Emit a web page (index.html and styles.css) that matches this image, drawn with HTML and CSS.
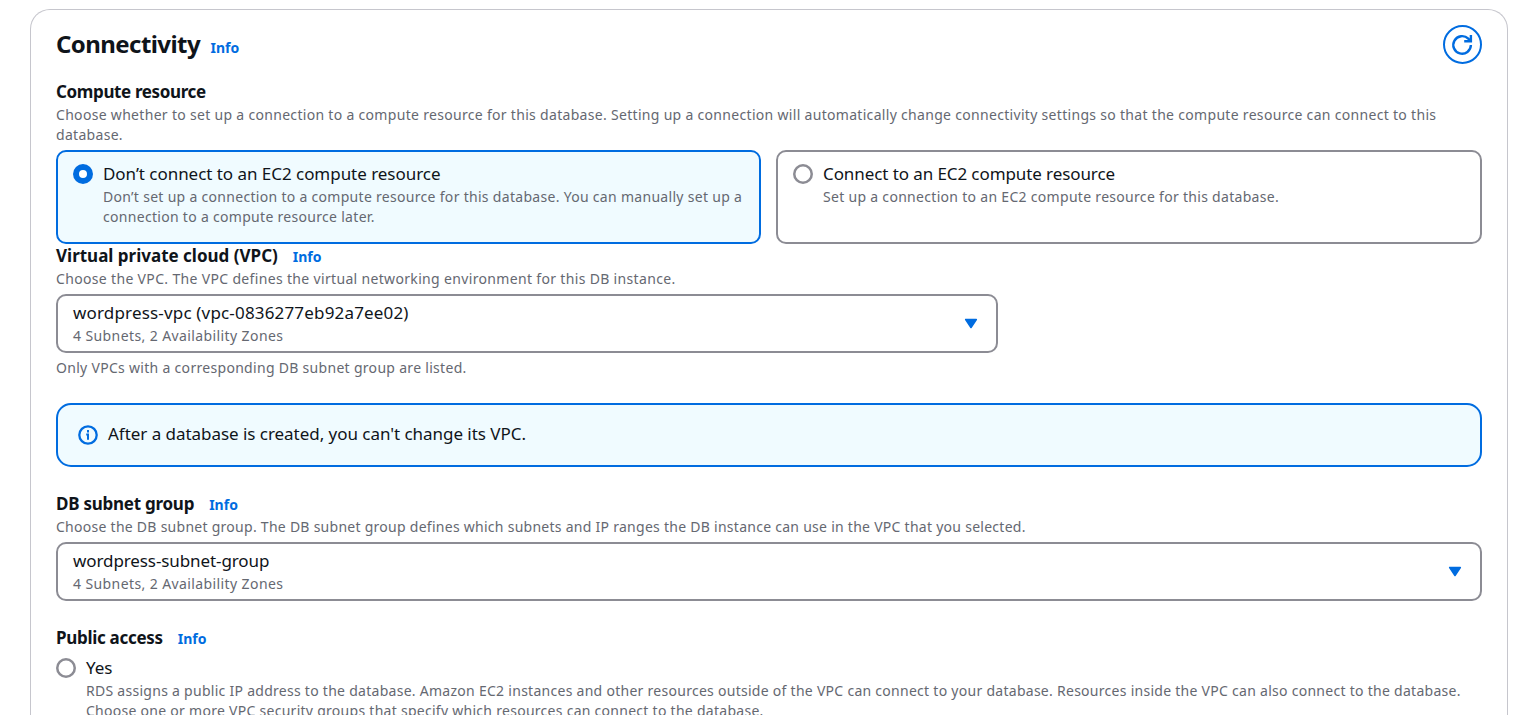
FILE: index.html
```html
<!DOCTYPE html>
<html lang="en">
<head>
<meta charset="utf-8">
<title>Connectivity</title>
<link rel="stylesheet" href="styles.css">
</head>
<body>
<main class="card">
  <header class="card-header">
    <h2 class="title"><span class="title-text">Connectivity</span><a class="info">Info</a></h2>
    <button class="refresh" aria-label="Refresh">
      <svg width="25" height="25" viewBox="0 0 25 25" fill="none" stroke="currentColor" stroke-width="2.4"><path d="M20.9 13a8.8 8.8 0 1 1-2.6-6.3L20.6 9"/><path d="M20.9 3v6.2h-6.7"/></svg>
    </button>
  </header>

  <section class="field">
    <h3 class="label"><span class="l-compute">Compute resource</span></h3>
    <p class="desc"><span class="d-compute">Choose whether to set up a connection to a compute resource for this database. Setting up a connection will automatically change connectivity settings so that the compute resource can connect to this</span><br>database.</p>
    <div class="tiles">
      <div class="tile selected">
        <span class="radio checked"></span>
        <div class="option">
          <div class="text"><span class="t-dont">Don’t connect to an EC2 compute resource</span></div>
          <p class="desc">Don’t set up a connection to a compute resource for this database. You can manually set up a<br>connection to a compute resource later.</p>
        </div>
      </div>
      <div class="tile">
        <span class="radio"></span>
        <div class="option">
          <div class="text"><span class="t-connect">Connect to an EC2 compute resource</span></div>
          <p class="desc">Set up a connection to an EC2 compute resource for this database.</p>
        </div>
      </div>
    </div>
  </section>

  <section class="field">
    <h3 class="label"><span class="l-vpc">Virtual private cloud (VPC)</span><a class="info">Info</a></h3>
    <p class="desc"><span class="d-vpc">Choose the VPC. The VPC defines the virtual networking environment for this DB instance.</span></p>
    <div class="select narrow">
      <div>
        <div class="text"><span class="t-vpc">wordpress-vpc (vpc-0836277eb92a7ee02)</span></div>
        <p class="desc"><span class="d-zones">4 Subnets, 2 Availability Zones</span></p>
      </div>
      <svg class="caret" width="14" height="12" viewBox="0 0 14 12"><path d="M1.7 1.5h10.6L7 9.5z" fill="currentColor" stroke="currentColor" stroke-width="1.6" stroke-linejoin="round"/></svg>
    </div>
    <p class="desc constraint">Only VPCs with a corresponding DB subnet group are listed.</p>
  </section>

  <div class="alert">
    <svg width="20" height="20" viewBox="0 0 20 20" fill="none" stroke="currentColor" stroke-width="2.3"><circle cx="10" cy="10" r="8.7"/><path d="M10 5v2.4M8.2 9.4H10v5.4" stroke-width="2"/></svg>
    <div class="text"><span class="t-alert">After a database is created, you can't change its VPC.</span></div>
  </div>

  <section class="field">
    <h3 class="label"><span class="l-subnet">DB subnet group</span><a class="info">Info</a></h3>
    <p class="desc"><span class="d-subnet">Choose the DB subnet group. The DB subnet group defines which subnets and IP ranges the DB instance can use in the VPC that you selected.</span></p>
    <div class="select">
      <div>
        <div class="text"><span class="t-subnet">wordpress-subnet-group</span></div>
        <p class="desc"><span class="d-zones">4 Subnets, 2 Availability Zones</span></p>
      </div>
      <svg class="caret" width="14" height="12" viewBox="0 0 14 12"><path d="M1.7 1.5h10.6L7 9.5z" fill="currentColor" stroke="currentColor" stroke-width="1.6" stroke-linejoin="round"/></svg>
    </div>
  </section>

  <section class="field public">
    <h3 class="label"><span class="l-public">Public access</span><a class="info">Info</a></h3>
    <div class="choice">
      <span class="radio"></span>
      <div class="option">
        <div class="text">Yes</div>
        <p class="desc"><span class="d-rds">RDS assigns a public IP address to the database. Amazon EC2 instances and other resources outside of the VPC can connect to your database. Resources inside the VPC can also connect to the database.</span><br><span class="d-rds">Choose one or more VPC security groups that specify which resources can connect to the database.</span></p>
      </div>
    </div>
  </section>
</main>
</body>
</html>
```
FILE: styles.css
```css
* { box-sizing: border-box; }
html, body { height: 100%; }
body {
  margin: 0;
  padding: 9px 22px 0 30px;
  overflow: hidden;
  background: #fff;
  color: #0f141a;
  font-family: "Noto Sans", "Open Sans", sans-serif;
}
h2, h3, p { margin: 0; }
.card {
  height: 706px;
  padding: 15px 25px 0;
  border: 1px solid #c6c6cd;
  border-bottom: 0;
  border-radius: 20px 20px 0 0;
  overflow: hidden;
}
.card-header {
  display: flex;
  justify-content: space-between;
  align-items: center;
  height: 39px;
  margin-bottom: 16px;
}
.title {
  display: flex;
  align-items: baseline;
  gap: 10.5px;
  padding-bottom: 2px;
  font-size: 24px;
  line-height: 30px;
  font-weight: 700;
}
.title-text { letter-spacing: -0.57px; }
.info {
  color: #006ce0;
  font-size: 14px;
  font-weight: 700;
  line-height: 20px;
  letter-spacing: 0;
}
.refresh {
  display: flex;
  align-items: center;
  justify-content: center;
  width: 39px;
  height: 39px;
  padding: 0;
  border: 2px solid #006ce0;
  border-radius: 50%;
  background: #fff;
  color: #006ce0;
}
.label {
  display: flex;
  align-items: baseline;
  gap: 15px;
  height: 25px;
  font-size: 17px;
  line-height: 23px;
  font-weight: 700;
}
.text {
  height: 25px;
  font-size: 17px;
  line-height: 23px;
  white-space: nowrap;
}
.desc {
  color: #656871;
  font-size: 14px;
  line-height: 20px;
  letter-spacing: 0.3px;
  white-space: nowrap;
}
.l-compute { letter-spacing: -0.37px; }
.l-subnet { letter-spacing: -0.25px; }
.l-public { letter-spacing: -0.3px; }
.t-dont { letter-spacing: -0.04px; }
.t-connect { letter-spacing: -0.09px; }
.t-vpc { letter-spacing: 0.17px; }
.t-alert { letter-spacing: -0.04px; }
.t-subnet { letter-spacing: -0.1px; }
.d-compute { letter-spacing: 0.308px; }
.d-vpc { letter-spacing: 0.335px; }
.d-zones { letter-spacing: 0.4px; }
.d-subnet { letter-spacing: 0.268px; }
.d-rds { letter-spacing: 0.275px; }
.tiles {
  display: grid;
  grid-template-columns: 705px 706px;
  gap: 15px;
  margin-top: 5px;
}
.tile {
  display: flex;
  gap: 10px;
  height: 94px;
  padding: 10px 15px;
  border: 2px solid #8c8c94;
  border-radius: 10px;
}
.tile.selected { border-color: #006ce0; background: #f0fbff; }
.radio {
  flex: none;
  width: 20px;
  height: 20px;
  margin-top: 2px;
  border-radius: 50%;
  background: #fff;
  box-shadow: inset 0 0 0 2.5px #8c8c94;
}
.radio.checked { box-shadow: inset 0 0 0 6px #006ce0; }
.select {
  display: flex;
  align-items: center;
  justify-content: space-between;
  height: 59px;
  margin-top: 5px;
  padding: 0 18px 0 15px;
  border: 2px solid #8c8c94;
  border-radius: 10px;
}
.select.narrow { width: 942px; }
.caret { color: #006ce0; }
.constraint { margin-top: 5px; }
.alert {
  display: flex;
  align-items: center;
  gap: 10px;
  height: 64px;
  margin: 25px 0;
  padding: 0 20px;
  border: 2px solid #006ce0;
  border-radius: 15px;
  background: #f0fbff;
  color: #006ce0;
}
.alert .text { color: #0f141a; height: 27px; }
.public { margin-top: 25px; }
.choice { display: flex; gap: 10px; margin-top: 5px; }
```
